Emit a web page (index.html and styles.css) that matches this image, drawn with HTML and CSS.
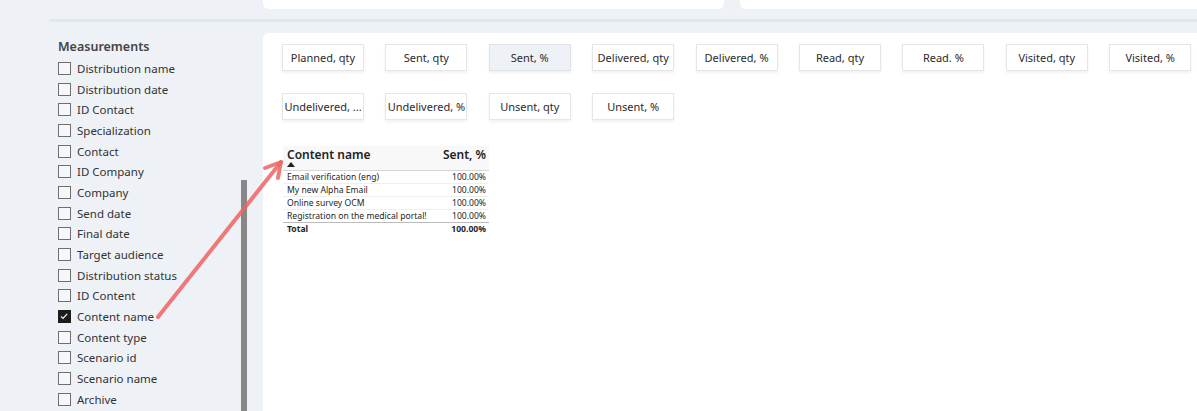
FILE: index.html
```html
<!DOCTYPE html>
<html>
<head>
<meta charset="utf-8">
<link rel="stylesheet" href="styles.css">
</head>
<body>
<div class="top">
  <div class="top-card first"></div>
  <div class="top-card second"></div>
</div>
<div class="divider"></div>
<div class="content">
  <aside class="sidebar">
    <div class="side-title">Measurements</div>
    <ul class="fields">
      <li><span class="cb"></span>Distribution name</li>
      <li><span class="cb"></span>Distribution date</li>
      <li><span class="cb"></span>ID Contact</li>
      <li><span class="cb"></span>Specialization</li>
      <li><span class="cb"></span>Contact</li>
      <li><span class="cb"></span>ID Company</li>
      <li><span class="cb"></span>Company</li>
      <li><span class="cb"></span>Send date</li>
      <li><span class="cb"></span>Final date</li>
      <li><span class="cb"></span>Target audience</li>
      <li><span class="cb"></span>Distribution status</li>
      <li><span class="cb"></span>ID Content</li>
      <li><span class="cb checked"><svg viewBox="0 0 12 12" width="12" height="12"><path d="M3 6.3 L5 8.3 L9.2 3.8" fill="none" stroke="#fff" stroke-width="1.2"/></svg></span>Content name</li>
      <li><span class="cb"></span>Content type</li>
      <li><span class="cb"></span>Scenario id</li>
      <li><span class="cb"></span>Scenario name</li>
      <li><span class="cb"></span>Archive</li>
    </ul>
    <div class="scrollbar"></div>
  </aside>
  <main class="panel">
    <div class="buttons">
      <div class="btn">Planned, qty</div>
      <div class="btn">Sent, qty</div>
      <div class="btn active">Sent, %</div>
      <div class="btn">Delivered, qty</div>
      <div class="btn">Delivered, %</div>
      <div class="btn">Read, qty</div>
      <div class="btn">Read. %</div>
      <div class="btn">Visited, qty</div>
      <div class="btn">Visited, %</div>
      <div class="btn">Undelivered, ...</div>
      <div class="btn">Undelivered, %</div>
      <div class="btn">Unsent, qty</div>
      <div class="btn">Unsent, %</div>
    </div>
    <table class="tbl">
      <thead>
        <tr><th class="name">Content name<span class="sort"></span></th><th class="num">Sent, %</th></tr>
      </thead>
      <tbody>
        <tr><td>Email verification (eng)</td><td class="num">100.00%</td></tr>
        <tr><td>My new Alpha Email</td><td class="num">100.00%</td></tr>
        <tr><td>Online survey OCM</td><td class="num">100.00%</td></tr>
        <tr><td>Registration on the medical portal!</td><td class="num">100.00%</td></tr>
      </tbody>
      <tfoot>
        <tr><td>Total</td><td class="num">100.00%</td></tr>
      </tfoot>
    </table>
  </main>
</div>
<svg class="arrow" width="1197" height="411" viewBox="0 0 1197 411">
  <g stroke="#ee6464" stroke-opacity="0.85" stroke-width="4" stroke-linecap="round" stroke-linejoin="round" fill="none">
    <path d="M158 317 L281 162"/>
    <path d="M281 162 L265 168 M281 162 L278 178"/>
  </g>
</svg>
</body>
</html>
```

FILE: styles.css
```css
* { box-sizing: border-box; }
html, body { margin: 0; padding: 0; }
body {
  width: 1197px;
  height: 411px;
  overflow: hidden;
  background: #eef1f5;
  font-family: "Segoe UI", "Noto Sans", "Open Sans", sans-serif;
  color: #252525;
  position: relative;
}
.top {
  display: flex;
  gap: 16px;
  padding-left: 263px;
  height: 9px;
}
.top-card {
  background: #fff;
  height: 9px;
  border-radius: 0 0 6px 6px;
}
.top-card.first { width: 461px; }
.top-card.second { flex: 1; border-bottom-right-radius: 0; }
.divider {
  margin-top: 10px;
  margin-left: 50px;
  height: 3px;
  background: #e2e8f0;
}
.content {
  display: flex;
  margin-top: 11px;
  height: 378px;
}
.sidebar {
  width: 263px;
  flex: none;
  position: relative;
  padding-left: 58px;
  padding-top: 5px;
}
.side-title {
  font-size: 12.5px;
  font-weight: 600;
  color: #444;
  height: 19px;
  line-height: 18px;
}
.fields {
  list-style: none;
  margin: 0;
  padding: 0;
  padding-top: 1px;
}
.fields li {
  display: flex;
  align-items: center;
  height: 20.7px;
  font-size: 11.5px;
  color: #333;
}
.cb {
  width: 13px;
  height: 13px;
  border: 1px solid #6f6f6f;
  margin-right: 6px;
  display: inline-flex;
  background: #f5f7fa;
}
.cb.checked {
  background: #1c1c1c;
  border-color: #1c1c1c;
}
.cb.checked svg { margin: -1px 0 0 -1px; }
.scrollbar {
  position: absolute;
  left: 241px;
  top: 147px;
  width: 6px;
  bottom: 0;
  background: #888;
}
.panel {
  flex: 1;
  background: #fff;
  border-top-left-radius: 6px;
  padding: 11px 0 0 19px;
}
.buttons {
  display: grid;
  grid-template-columns: repeat(9, 82px);
  column-gap: 21.4px;
  row-gap: 22px;
}
.btn {
  height: 27px;
  border: 1px solid #e6e6e6;
  box-shadow: 0 2px 3px rgba(0,0,0,0.06);
  background: #fff;
  font-size: 11px;
  color: #2a2a2a;
  display: flex;
  align-items: center;
  justify-content: center;
  white-space: nowrap;
}
.btn.active {
  background: #eef1f5;
  border-color: #dfe3e8;
}
.tbl {
  margin-top: 26px;
  margin-left: 1px;
  border-collapse: collapse;
  width: 206px;
  font-size: 8.6px;
  color: #252525;
}
.tbl th {
  font-size: 12px;
  text-align: left;
  background: #f8f8f8;
  height: 24px;
  padding: 0 3px 0 4px;
  vertical-align: top;
  line-height: 17px;
  font-weight: 600;
  color: #222;
  border-bottom: 1px solid #d6d6d6;
}
.tbl th.num { text-align: right; font-weight: 600; }
.tbl th.name { position: relative; }
.sort {
  position: absolute;
  left: 4px;
  top: 16px;
  width: 0; height: 0;
  border-left: 4px solid transparent;
  border-right: 4px solid transparent;
  border-bottom: 5px solid #222;
}
.tbl td {
  height: 12.6px;
  padding: 0 3px 0 4px;
  line-height: 12px;
  border-bottom: 1px solid #efefef;
  white-space: nowrap;
}
.tbl tbody tr:last-child td { border-bottom: 1px solid #bbb; }
.tbl tfoot td { font-weight: 700; border-bottom: none; height: 14px; }
.num { text-align: right; }
.arrow {
  position: absolute;
  left: 0;
  top: 0;
  pointer-events: none;
}
```
